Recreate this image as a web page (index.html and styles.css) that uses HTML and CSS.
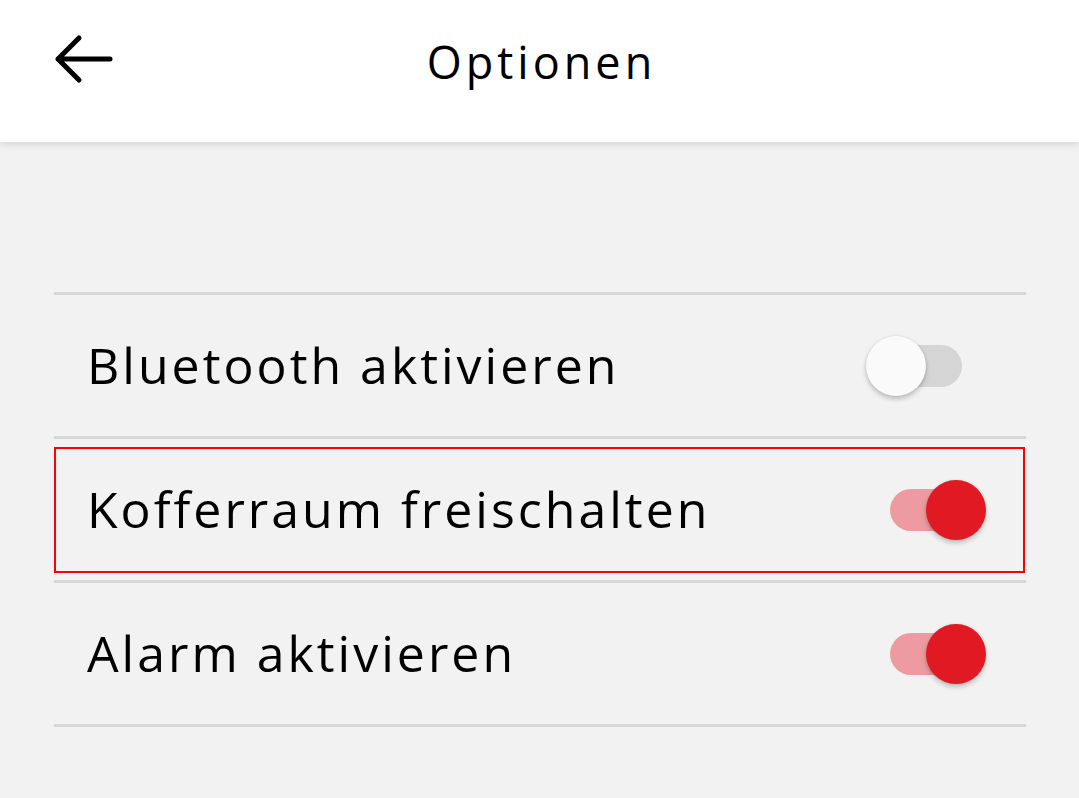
FILE: index.html
```html
<!DOCTYPE html>
<html lang="de">
<head>
<meta charset="utf-8">
<title>Optionen</title>
<link rel="stylesheet" href="styles.css">
</head>
<body>
<header class="appbar">
  <button class="back" aria-label="Zurück">
    <svg width="60" height="50" viewBox="0 0 60 50" aria-hidden="true">
      <path d="M4 25 H56 M25 4 L4 25 L25 46" fill="none" stroke="#000" stroke-width="5" stroke-linecap="round" stroke-linejoin="round"/>
    </svg>
  </button>
  <h1 class="title">Optionen</h1>
  <span class="spacer"></span>
</header>
<main class="content">
  <ul class="options">
    <li class="option">
      <span class="label">Bluetooth aktivieren</span>
      <span class="switch"><span class="track"></span><span class="thumb"></span></span>
    </li>
    <li class="option highlight">
      <span class="label">Kofferraum freischalten</span>
      <span class="switch on"><span class="track"></span><span class="thumb"></span></span>
    </li>
    <li class="option">
      <span class="label">Alarm aktivieren</span>
      <span class="switch on"><span class="track"></span><span class="thumb"></span></span>
    </li>
  </ul>
</main>
</body>
</html>
```
FILE: styles.css
```css
* { box-sizing: border-box; }
html, body { margin: 0; padding: 0; }
body {
  width: 1079px;
  height: 798px;
  overflow: hidden;
  background: #f2f2f2;
  font-family: "Open Sans", "DejaVu Sans", sans-serif;
  color: #000;
}
.appbar {
  height: 142px;
  background: #fff;
  box-shadow: 0 2px 8px rgba(0,0,0,0.13);
  display: grid;
  grid-template-columns: 1fr auto 1fr;
  align-items: center;
  position: relative;
  z-index: 1;
}
.back {
  justify-self: start;
  margin-left: 54px;
  margin-top: -24px;
  padding: 0;
  border: 0;
  background: none;
  width: 60px;
  height: 50px;
  display: flex;
}
.title {
  margin: 0;
  margin-top: -20px;
  font-weight: 400;
  font-size: 45px;
  letter-spacing: 4px;
  padding-left: 4px;
}
.content {
  padding: 150px 53px 0 54px;
}
.options {
  list-style: none;
  margin: 0;
  padding: 0;
  border-top: 3px solid #d7d7d7;
}
.option {
  height: 144px;
  border-bottom: 3px solid #d7d7d7;
  display: flex;
  align-items: center;
  justify-content: space-between;
  padding: 0 40px 0 33px;
  position: relative;
}
.label {
  font-size: 50px;
  letter-spacing: 3px;
  margin-top: -2px;
}
.highlight::after {
  content: "";
  position: absolute;
  left: 0;
  right: 1px;
  top: 8px;
  bottom: 7px;
  border: 2px solid #ff0000;
  pointer-events: none;
}
.switch {
  position: relative;
  width: 120px;
  height: 60px;
  flex: none;
}
.track {
  position: absolute;
  left: 24px;
  top: 9px;
  width: 72px;
  height: 42px;
  border-radius: 21px;
  background: #d5d5d5;
}
.thumb {
  position: absolute;
  left: 0;
  top: 0;
  width: 60px;
  height: 60px;
  border-radius: 50%;
  background: #fafafa;
  box-shadow: 0 3px 5px rgba(0,0,0,0.22), 0 0 2px rgba(0,0,0,0.12);
}
.switch.on .track { background: #ed9ba0; }
.switch.on .thumb {
  left: 60px;
  background: #e01923;
}
```
